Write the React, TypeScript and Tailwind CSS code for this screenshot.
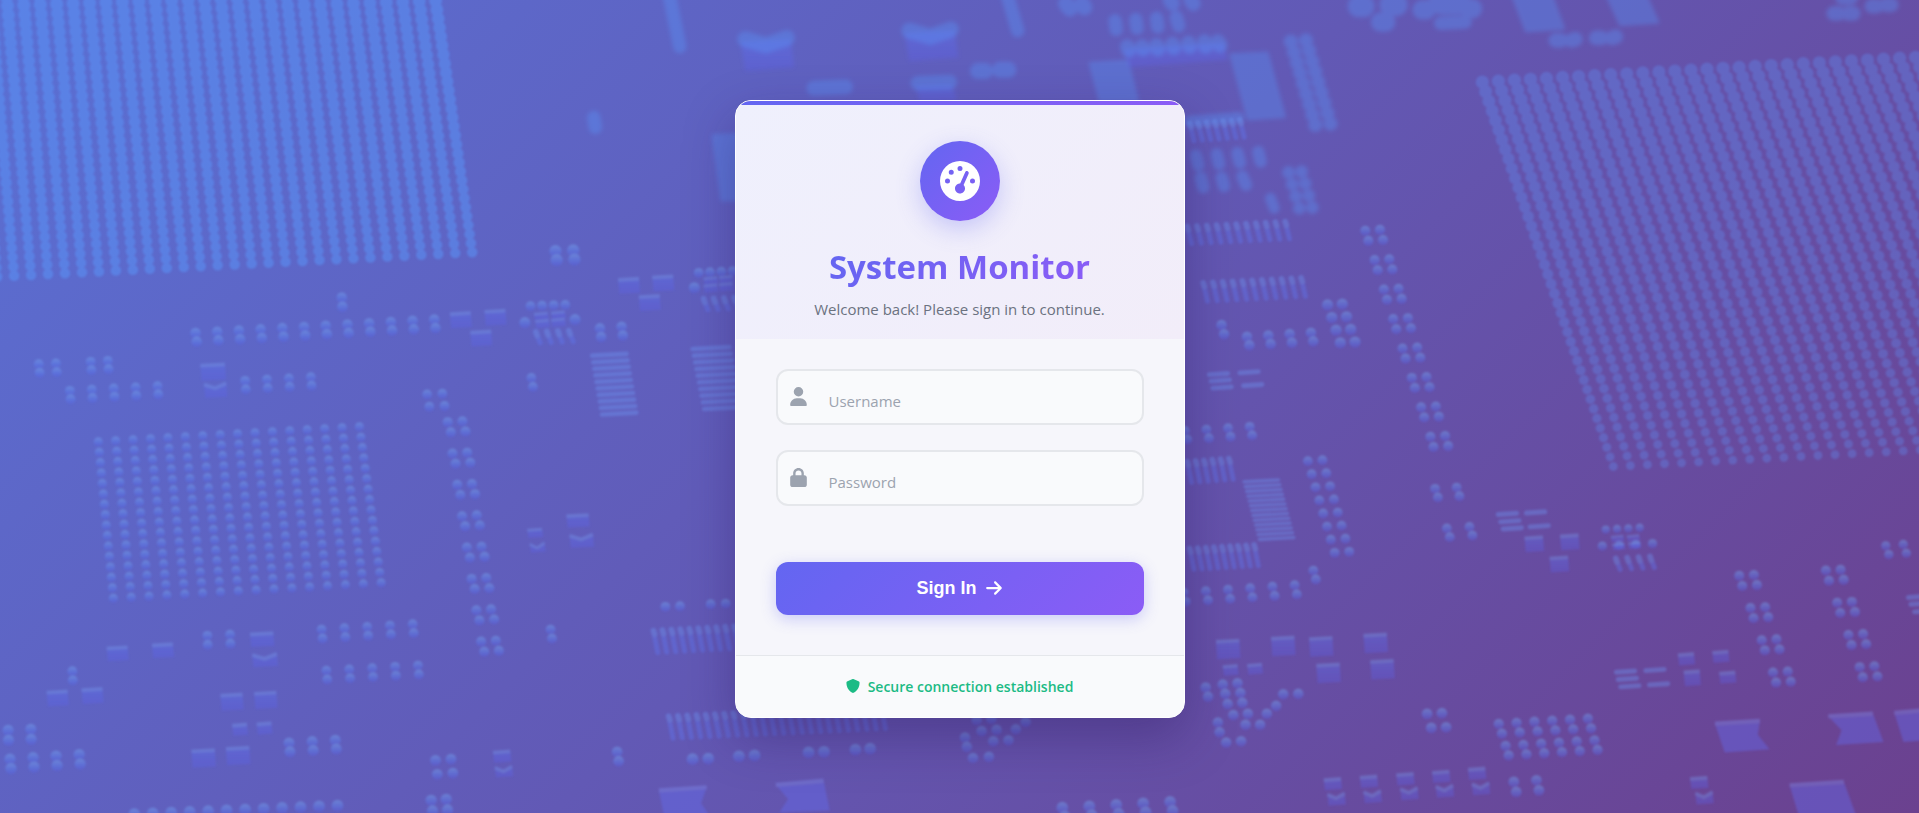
import React from "react";
import { FaArrowRight, FaGaugeHigh, FaLock, FaShield, FaUser } from "react-icons/fa6";

type Point = [number, number];

// cols, rows, top-left, top-right, bottom-left, radius, optional bottom-right, optional bottom radius
type Lattice = [number, number, Point, Point, Point, number, Point?, number?];

const bigLattices: Lattice[] = [
  [29, 31, [-21, -2], [354, -14], [-2, 226], 5.4, [386, 206], 4.3],
  [29, 41, [1211, 67], [1578, 46], [1318, 381], 5.4, [1708, 360], 3.6],
];

const lattices: Lattice[] = [
  [16, 16, [80.6, 360.8], [293.9, 348.6], [92.9, 488.6], 3.7, [311.6, 476]],
  [12, 2, [160, 272], [355, 261], [161, 279], 4.3],
  [1, 2, [279.5, 243], [279.5, 243], [280, 250.5], 4.3],
  [2, 2, [454, 205], [468.5, 204.5], [455, 212.5], 5],
  [2, 2, [32, 297.4], [46, 296.8], [32.7, 304.5], 4],
  [2, 2, [74.4, 295.5], [88.4, 294.7], [75, 302.3], 4],
  [5, 2, [57.4, 319.2], [129, 315.4], [58, 326], 4],
  [4, 2, [200.5, 311], [254.2, 308], [201.1, 318], 4],
  [2, 2, [490.3, 268.2], [508, 266.9], [491.3, 275.3], 4.3],
  [1, 2, [434.3, 308.6], [434.3, 308.6], [435.6, 316], 4],
  [2, 2, [349.2, 322.2], [361.6, 321.6], [351, 332.2], 4],
  [4, 1, [433.6, 250], [462, 249], [433.6, 250], 4],
  [2, 1, [429, 263.5], [470, 261], [429, 263.5], 4.5],
  [4, 1, [571, 222.8], [598.7, 221.4], [571, 222.8], 4],
  [1, 1, [567.4, 235], [567.4, 235], [567.4, 235], 4.5],
  [2, 4, [1084.6, 249], [1096.6, 248.4], [1095, 280], 4.6],
  [1, 2, [998, 265.5], [998, 265.5], [1000, 273], 4.3],
  [4, 2, [1018.8, 275], [1071, 271.8], [1020.7, 282], 4.3],
  [4, 2, [968, 352], [1021, 348.6], [970, 359], 4],
  [2, 8, [1068.5, 376.6], [1080.4, 375.8], [1090.4, 451.5], 4],
  [1, 2, [1073, 466], [1073, 466], [1075, 473.3], 4],
  [6, 2, [967, 484], [1057.7, 478], [968.8, 491.5], 4],
  [2, 2, [1172.4, 399.2], [1190, 398.2], [1174.7, 406.3], 4],
  [2, 2, [1182, 431.6], [1200.5, 430.3], [1184.4, 438.7], 4],
  [4, 1, [1311.8, 432.5], [1339.5, 431], [1311.8, 432.5], 3.4],
  [4, 1, [1309, 446], [1350, 444], [1309, 446], 3.8],
  [2, 2, [1540.5, 445.8], [1554.8, 444.7], [1543, 453], 3.8],
  [2, 2, [1165.9, 583], [1178, 582.5], [1169.3, 594.5], 4.4],
  [6, 2, [1224.4, 591.2], [1297.2, 586.9], [1227, 599.1], 4.2],
  [6, 2, [1230, 609.2], [1302.6, 604.7], [1232.5, 617], 4.2],
  [2, 2, [1236.7, 638.6], [1255.2, 637.3], [1238.7, 646.8], 4.4],
  [2, 2, [356, 621], [368.7, 620], [357.5, 632.4], 4.4],
  [2, 2, [352.5, 653.6], [364.8, 652.8], [353.6, 662.3], 4.6],
  [2, 2, [169.7, 519.3], [188.2, 518.3], [170, 526.7], 4],
  [1, 2, [59.4, 548.2], [59.4, 548.2], [59.8, 555.6], 4],
  [5, 2, [263, 514.2], [337.4, 509.8], [263.8, 521.5], 4],
  [5, 2, [266.9, 547.7], [341.7, 543.6], [267.6, 555], 4],
  [1, 2, [450, 514.2], [450, 514.2], [451.2, 521.5], 4],
  [2, 1, [543.8, 495.6], [555.7, 495.1], [543.8, 495.6], 4],
  [2, 1, [580.8, 493.5], [593, 493], [580.8, 493.5], 4],
  [2, 2, [7, 596.4], [25.5, 595.6], [7.3, 604.6], 4.5],
  [4, 2, [8.5, 620], [65, 616.3], [9.3, 627.7], 4.6],
  [3, 2, [236.4, 606.8], [274.2, 604.6], [237.2, 614], 4.5],
  [1, 2, [504.4, 614], [504.4, 614], [505.6, 621.7], 4.4],
  [2, 1, [566, 620], [578.8, 619.6], [566, 620], 4.8],
  [2, 1, [603.8, 617.7], [616.6, 617], [603.8, 617.7], 4.8],
  [2, 1, [660.7, 614.5], [673.3, 614], [660.7, 614.5], 4.8],
  [2, 1, [699, 612.3], [711, 611.5], [699, 612.3], 4.8],
  [5, 2, [868, 659.7], [956, 655], [870, 667], 4.8],
  [12, 1, [110, 665], [276, 658], [110, 665], 4.8],
];

// Out-of-focus lattices near the top edge
const hazyLattices: Lattice[] = [
  [2, 9, [1054.6, 34], [1067, 33], [1074.6, 102], 5.8],
  [2, 4, [1052.7, 140.8], [1063.4, 140.2], [1061.5, 170], 5.2],
];

// Chains of 2x2 pads: start x, start y, step x, step y, count
const chains: [number, number, number, number, number][] = [
  [366, 344.8, 3.9, 25.6, 8],
  [1115.4, 188.4, 7.6, 24.05, 8],
  [1420.8, 470.3, 9.2, 26.3, 4],
  [1491.6, 466, 9.2, 26.3, 4],
];

const spots: Point[] = [
  [985, 561.5], [987, 569], [999, 559], [1011, 558], [1001, 566.7], [1013.4, 566], [1003, 575], [1015, 574],
  [1007.6, 584], [1019.5, 583], [1035, 583], [1042.6, 576.5], [1048.4, 567], [1060.7, 566.7], [1017.6, 592],
  [1029.5, 592], [995, 590], [996.4, 598], [1001.8, 606.5], [1014, 605.4], [798, 588], [810, 587], [838, 589.6],
  [802, 597], [814.3, 596], [830, 595.6], [788.5, 602.4], [790, 610], [811.6, 605.4], [824, 604.6], [795, 619], [808, 618],
];

// Rounded strokes: x1, y1, x2, y2, thickness
const strokes: [number, number, number, number, number][] = [
  [485.3, 96, 486.6, 104, 11],
  [547, -4, 555.5, 38, 11],
  [823, -4, 831.5, 25, 11],
  [609, 32, 626, 37, 13], [626, 37, 643, 31, 13],
  [743, 25, 760, 30, 13], [760, 30, 777, 24, 13],
  [665, 72, 691, 71, 12], [750, 68, 776, 67, 12],
  [799, 58, 805, 58, 13], [817, 57, 824, 57, 13],
  [871, 3, 874, 7, 13], [884, 3, 886, 6, 13],
  [911, 17, 912, 24, 11], [928, 16, 929, 23, 11], [945, 15, 946, 22, 11], [961, 14, 963, 21, 11],
  [956, 0, 958, 3, 12], [973, 0, 975, 3, 12],
  [921, 38, 922, 41, 12], [933, 38, 934, 40, 12], [945, 37, 946, 40, 12], [958, 36, 959, 39, 12],
  [971, 35, 972, 38, 12], [984, 34, 985, 38, 12], [995, 34, 997, 37, 12],
  [1110, 5, 1114, 5, 18], [1136, 4, 1141, 4, 18], [1128, 18, 1132, 18, 16],
  [1162, 8, 1165, 8, 16], [1200, 7, 1203, 7, 16], [1178, 1, 1190, 1, 22], [1177, 19, 1197, 18, 11],
  [1271, 33, 1275, 33, 12], [1284, 33, 1287, 32, 12], [1304, 31, 1308, 31, 12], [1317, 31, 1320, 30, 12],
  [1498, 11, 1502, 11, 12], [1510, 11, 1514, 11, 12], [1529, 5, 1533, 5, 12], [1541, 4, 1545, 4, 12], [1505, -2, 1512, -2, 12],
  [972, 99, 1012, 96, 9],
  [977, 127, 979, 135, 10], [994, 126, 996, 134, 10], [1011, 125, 1013, 133, 10], [1028, 124, 1030, 132, 10],
  [981, 145, 983, 153, 10], [998, 145, 1000, 152, 10], [1015, 144, 1018, 151, 10], [1038, 162, 1041, 170, 9],
];

// Small bars: left x, y
const bars: Point[] = [
  [988, 306], [989.5, 311.3], [991, 317], [1013, 304.5], [1016, 315],
  [1224, 420.2], [1226, 426.2], [1228, 432], [1247, 419], [1250, 430.3],
  [1320.5, 549], [1322, 555], [1324, 561], [1344.5, 547.7], [1347.5, 559.4],
  [1559, 488], [1561, 493.5], [1564, 499.7],
];

// Chips: centre x, top y, width, height, notch shape
const chips: [number, number, number, number, boolean?][] = [
  [376.3, 255, 17, 12], [404.6, 253, 17, 12], [393, 270, 17, 12], [513.7, 227, 17, 12], [541.6, 225, 17, 12],
  [530.6, 241, 17, 12], [174, 297, 20, 13], [176, 313, 18, 11, true],
  [442, 255, 11, 6], [456, 254, 11, 6], [443, 261, 11, 6], [456, 260, 11, 6],
  [580.5, 226, 11, 6], [593, 225, 11, 6], [580.5, 232, 11, 6], [593, 231, 11, 6],
  [1253, 438, 15, 12], [1282, 436.5, 15, 12], [1273.5, 454.5, 15, 12],
  [1321, 437, 10, 5], [1334, 436.5, 10, 5], [1322, 443.5, 10, 5], [1335, 442.5, 10, 5],
  [1377.3, 533.5, 13, 9], [1405.4, 531.5, 13, 9], [1382, 547.5, 13, 12], [1411, 548.5, 13, 9],
  [1003, 522.5, 19, 15], [1048, 520, 19, 15], [1079, 520.3, 19, 15], [1123.5, 517.5, 19, 15],
  [1085, 542, 19, 15], [1129, 539, 19, 15], [1005, 543, 12, 8], [1025, 542, 12, 8],
  [437, 431.5, 12, 7], [439, 443.5, 12, 7, true], [472, 420, 18, 10], [475, 436.5, 19, 10, true],
  [214, 516.5, 19, 11], [216.4, 534, 20, 10, true], [96, 528, 17, 11], [133, 525.5, 17, 11],
  [47, 564, 17, 12], [75.5, 562, 17, 12], [189.4, 566.5, 18, 13], [217, 565, 18, 13],
  [196, 591, 12, 9], [216, 590, 12, 9], [166.2, 612, 19, 14], [194.4, 610, 19, 14],
  [410, 613, 14, 9], [411.5, 626, 14, 8, true],
  [1088.5, 635.5, 14, 9], [1118, 633.5, 14, 9], [1147.8, 631.5, 14, 9], [1177, 629.5, 14, 9], [1206.3, 627, 14, 9],
  [1091.5, 648, 14, 9, true], [1121, 646, 14, 9, true], [1151, 643.5, 14, 9, true], [1180, 641.5, 14, 9, true],
  [1209.5, 639.5, 14, 9, true], [1387.7, 634.5, 14, 9], [1392, 647, 14, 9, true],
];

// Combs of slanted pins: first x, y, last x, y, count, pin length
const combs: [number, number, number, number, number, number][] = [
  [438, 271, 465, 270, 4, 9], [575, 244, 600, 243, 4, 9],
  [972, 101, 1013, 98, 7, 14], [970, 185, 1050, 181, 11, 14], [983, 231, 1063, 227, 11, 15],
  [970, 377, 1004, 374.5, 6, 17], [972, 448, 1024.6, 445, 9, 17], [1320, 456, 1348, 454.5, 4, 9],
  [534, 515, 600, 511.5, 10, 18], [546.5, 585, 720, 577, 24, 18],
];

// Ladders of rungs: top-left, bottom-left, rung length, count
const ladders: [Point, Point, number, number][] = [
  [[484, 290.5], [492, 338.5], 28, 10],
  [[566, 285], [575.5, 334], 30, 10],
  [[1016.5, 393.5], [1029, 440.5], 28, 13],
];

const pads = [
  "583,111 606,110 612,163 590,163",
  "891,52 921,50 929,82 899,82",
  "1006,45 1035,43.5 1049,95 1020,97",
  "1236,-4 1267,-4 1277,23 1247,25",
  "1313,-4 1344,-4 1354,18 1324,20",
];

const plates = [
  "1401,591 1437.7,588.8 1436,600 1445.5,612 1409,614.5",
  "1493.6,585 1530,582.8 1538.6,606 1500,608.4 1504.4,596.4",
  "1547.5,582.2 1572,580 1572,604.6 1555,606",
  "1462,641.3 1506.3,638.6 1517,668 1470,668",
  "538.5,645.5 577.5,643 573,656 581,668 543,668",
  "634,641 673,637.5 678,662 637,663.5 644,652.5",
];

function latticePoints([cols, rows, tl, tr, bl, radius, br, endRadius]: Lattice) {
  const end: Point = br ?? [tr[0] + bl[0] - tl[0], tr[1] + bl[1] - tl[1]];
  const points: [number, number, number][] = [];
  for (let row = 0; row < rows; row++) {
    for (let col = 0; col < cols; col++) {
      const u = cols > 1 ? col / (cols - 1) : 0;
      const v = rows > 1 ? row / (rows - 1) : 0;
      const at = (i: 0 | 1) =>
        (1 - v) * ((1 - u) * tl[i] + u * tr[i]) + v * ((1 - u) * bl[i] + u * end[i]);
      points.push([at(0), at(1), radius + v * ((endRadius ?? radius) - radius)]);
    }
  }
  return points;
}

function Dots({ lattice }: { lattice: Lattice }) {
  return (
    <>
      {latticePoints(lattice).map(([x, y, r], i) => (
        <circle key={i} cx={x} cy={y} r={r} />
      ))}
    </>
  );
}

function CircuitBackdrop() {
  return (
    <svg
      aria-hidden="true"
      viewBox="0 0 1568 664"
      preserveAspectRatio="xMidYMid slice"
      className="absolute inset-0 size-full"
    >
      <defs>
        <linearGradient id="dot" x1="0" y1="0" x2="0" y2="1">
          <stop offset="0.1" stopColor="#78acf6" />
          <stop offset="0.55" stopColor="#5f84f2" />
          <stop offset="1" stopColor="#5560f0" stopOpacity="0.7" />
        </linearGradient>
        <linearGradient id="body" x1="0" y1="0" x2="0" y2="1">
          <stop offset="0" stopColor="#5f74f4" />
          <stop offset="1" stopColor="#5c60f0" stopOpacity="0.75" />
        </linearGradient>
        <filter id="soft" x="-5%" y="-5%" width="110%" height="110%">
          <feGaussianBlur stdDeviation="1" />
        </filter>
        <filter id="hazy" x="-5%" y="-5%" width="110%" height="110%">
          <feGaussianBlur stdDeviation="1.7" />
        </filter>
      </defs>

      <g filter="url(#soft)" fill="#5a96fa" opacity="0.5">
        <Dots lattice={bigLattices[0]} />
      </g>
      <g filter="url(#soft)" fill="#6094fa" opacity="0.32">
        <Dots lattice={bigLattices[1]} />
      </g>

      <g filter="url(#hazy)" fill="#5a96fa">
        <g opacity="0.34">
          {pads.map((points) => <polygon key={points} points={points} strokeLinejoin="round" strokeWidth="3" stroke="#5a96fa" />)}
        </g>
        <g opacity="0.4" fill="url(#body)">
          <polygon points="605,34 646,32 649,55 609,58" />
          <polygon points="739,27 780,25 783,47 743,50" />
          <polygon points="748,70 778,69 782,82 752,84" />
          <polygon points="918,40 1000,35 1003,49 922,55" />
        </g>
        <g opacity="0.36" stroke="#5a96fa" strokeLinecap="round">
          {strokes.map(([x1, y1, x2, y2, w], i) => (
            <line key={i} x1={x1} y1={y1} x2={x2} y2={y2} strokeWidth={w} />
          ))}
        </g>
        <g opacity="0.36">
          {hazyLattices.map((lattice, i) => <Dots key={i} lattice={lattice} />)}
        </g>
      </g>

      <g filter="url(#soft)" fill="url(#dot)">
        <g opacity="0.42">
          {lattices.map((lattice, i) => <Dots key={i} lattice={lattice} />)}
          {spots.map(([x, y], i) => <circle key={i} cx={x} cy={y} r={4.3} />)}
          {chains.map(([x, y, dx, dy, count]) =>
            Array.from({ length: count }, (_, i) => (
              <Dots
                key={`${x}-${i}`}
                lattice={[2, 2, [x + dx * i, y + dy * i], [x + dx * i + 12, y + dy * i - 0.7], [x + dx * i + 2.5, y + dy * i + 8.3], 4.1]}
              />
            )),
          )}
        </g>
        <g opacity="0.38">
          {chips.map(([cx, y, w, h, notch], i) => {
            const l = cx - w / 2;
            const r = cx + w / 2;
            return (
              <g key={i}>
                <polygon
                  fill="url(#body)"
                  points={
                    notch
                      ? `${l},${y} ${cx},${y + 3} ${r},${y - 1} ${r + 1},${y + h} ${l + 1},${y + h + 1}`
                      : `${l},${y + 1} ${r},${y} ${r + 1},${y + h} ${l + 1},${y + h + 1}`
                  }
                />
                <polyline
                  fill="none"
                  stroke="#7da6f5"
                  strokeOpacity="0.8"
                  strokeWidth={Math.min(3, h / 3)}
                  points={notch ? `${l},${y + 1} ${cx},${y + 4} ${r},${y}` : `${l},${y + 1.6} ${r},${y + 0.6}`}
                />
              </g>
            );
          })}
          {plates.map((points) => {
            const [a, b] = points.split(" ");
            return (
              <g key={points}>
                <polygon points={points} fill="#6470f6" />
                <polyline points={`${a} ${b}`} fill="none" stroke="#828ef2" strokeWidth="3.4" />
              </g>
            );
          })}
        </g>
        <g opacity="0.38" stroke="#7096f5" strokeLinecap="round">
          {bars.map(([x, y], i) => <line key={i} x1={x} y1={y} x2={x + 15} y2={y - 1} strokeWidth="4" />)}
          {combs.map(([x1, y1, x2, y2, count, length]) =>
            Array.from({ length: count }, (_, i) => {
              const t = i / (count - 1);
              const x = x1 + (x2 - x1) * t;
              const y = y1 + (y2 - y1) * t;
              return (
                <g key={`${x}-${y}`}>
                  <line x1={x} y1={y} x2={x + 3.5} y2={y + length} strokeWidth="4" stroke="#5f78f4" />
                  <line x1={x} y1={y} x2={x + 1} y2={y + 3} strokeWidth="4.6" />
                </g>
              );
            }),
          )}
          {ladders.map(([top, bottom, length, count]) =>
            Array.from({ length: count }, (_, i) => {
              const t = i / (count - 1);
              const x = top[0] + (bottom[0] - top[0]) * t;
              const y = top[1] + (bottom[1] - top[1]) * t;
              return <line key={`${x}-${y}`} x1={x} y1={y} x2={x + length} y2={y - 1.5} strokeWidth={38 / count} />;
            }),
          )}
        </g>
      </g>
    </svg>
  );
}

type FieldProps = {
  id: string;
  label: string;
  type: string;
  icon: React.ReactNode;
};

function Field({ id, label, type, icon }: FieldProps) {
  return (
    <label
      htmlFor={id}
      className="flex h-14 items-center gap-5 rounded-xl border-2 border-[#e5e7eb] bg-[#f9fafc] pr-4 pl-[11px] text-[#9ca3af] focus-within:border-[#6366f1]"
    >
      <span className="flex w-5 justify-center">{icon}</span>
      <input
        id={id}
        type={type}
        aria-label={label}
        placeholder={label}
        className="h-full min-w-0 flex-1 bg-transparent pt-2 text-[15px] text-[#1f2937] outline-none placeholder:text-[#9ca3af]"
      />
    </label>
  );
}

export default function App() {
  return (
    <main className="relative flex min-h-screen items-center justify-center overflow-hidden bg-[linear-gradient(135deg,#5a70d4_0%,#6259b5_50%,#6b418f_100%)] pt-1 font-['Open_Sans','Noto_Sans',sans-serif]">
      <CircuitBackdrop />
      <div className="relative my-8 w-full max-w-[450px] overflow-hidden rounded-2xl border border-white bg-[#f6f6fb] shadow-[0_20px_50px_rgba(40,20,90,0.35)]">
        <div className="h-1 bg-linear-to-r from-[#6366f1] to-[#8b5cf6]" />
        <header className="flex flex-col items-center bg-[linear-gradient(135deg,#eff0fd,#f2edf9)] px-10 pt-9 pb-[18px] text-center">
          <div className="flex size-20 items-center justify-center rounded-full bg-[linear-gradient(135deg,#6366f1,#8b5cf6)] text-white shadow-[0_8px_25px_rgba(99,102,241,0.3)]">
            <FaGaugeHigh size={40} />
          </div>
          <h1 className="mt-6 bg-[linear-gradient(135deg,#6366f1,#8b5cf6)] bg-clip-text text-[33px] leading-[44px] font-bold text-transparent">
            System Monitor
          </h1>
          <p className="mt-2 text-[15px] leading-6 text-[#6b7280]">Welcome back! Please sign in to continue.</p>
        </header>

        <form className="px-10 pt-[30px] pb-10" onSubmit={(event) => event.preventDefault()}>
          <div className="flex flex-col gap-[25px]">
            <Field id="username" label="Username" type="text" icon={<FaUser size={19} />} />
            <Field id="password" label="Password" type="password" icon={<FaLock size={19} />} />
          </div>
          <button
            type="submit"
            className="mt-14 flex h-[53px] w-full items-center justify-center gap-2 rounded-xl bg-[linear-gradient(135deg,#6366f1,#8b5cf6)] font-['Liberation_Sans',sans-serif] text-lg font-bold text-white shadow-[0_4px_15px_rgba(99,102,241,0.3)]"
          >
            Sign In
            <FaArrowRight size={18} />
          </button>
        </form>

        <footer className="flex h-[62px] items-center justify-center gap-2 border-t border-[#e5e7eb] bg-[#f9fafc] text-[14px] font-semibold text-[#1cbb85]">
          <FaShield size={14} />
          Secure connection established
        </footer>
      </div>
    </main>
  );
}
